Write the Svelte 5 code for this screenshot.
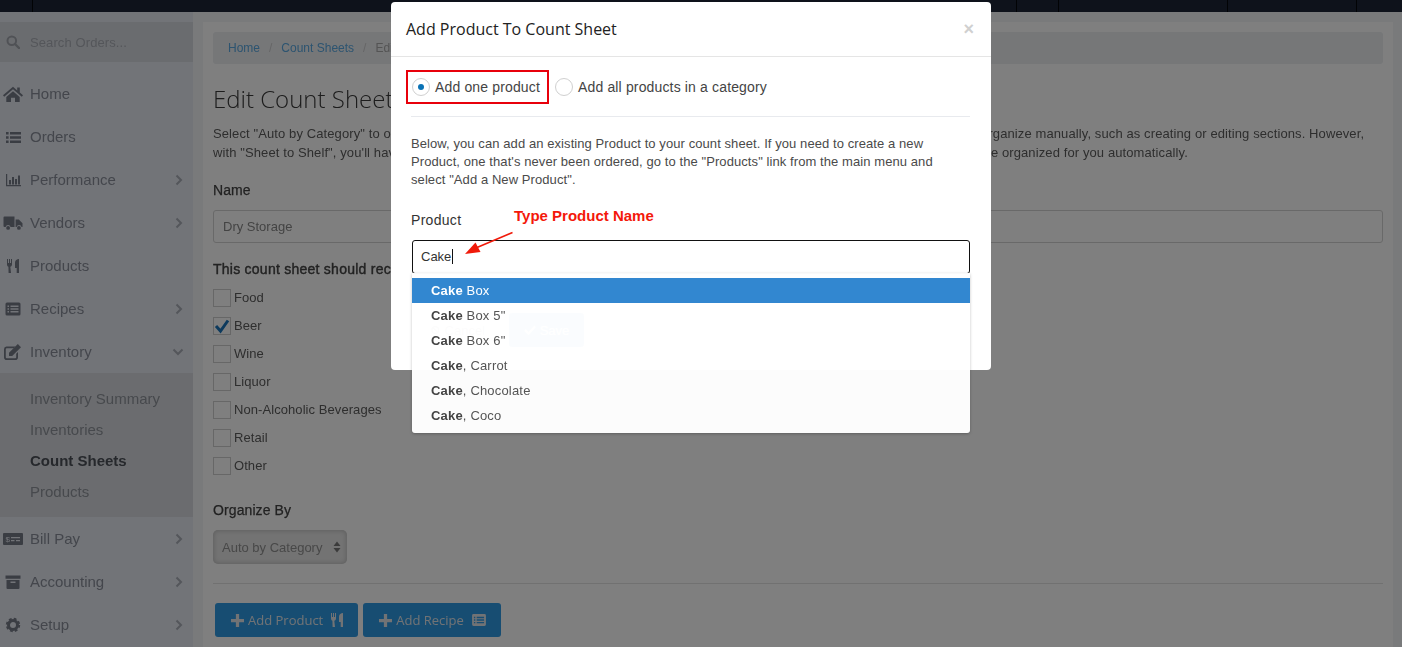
<script>
  const icons = {
    home: `<path d="M10 .8 0 9.3l1.2 1.4L10 3.3l8.8 7.4L20 9.3l-3.2-2.7V1.4h-2.6v3z"/><path d="M3.3 11 10 5.3l6.7 5.7v5H12v-4.2H8V16H3.3z"/>`,
    list: `<path d="M3 3h2.6v2.5H3zM7 3h11v2.5H7zM3 7.2h2.6v2.5H3zM7 7.2h11v2.5H7zM3 11.4h2.6v2.5H3zM7 11.4h11v2.5H7z"/>`,
    chart: `<path d="M3 2h1.2v11H18v1.2H3z"/><path d="M6 8h2v4.4H6zM9 5h2v7.4H9zM12 7h2v5.4h-2zM15 3.5h2v8.9h-2z"/>`,
    truck: `<path d="M.5 2.5A1 1 0 0 1 1.5 1.5h10v10.5H7.6a2.6 2.6 0 0 0-5 0H1.5a1 1 0 0 1-1-1zM12.6 4.5h3.2l3.7 3.7V12h-.9a2.6 2.6 0 0 0-5 0h-1z"/><circle cx="5.1" cy="12.9" r="1.9"/><circle cx="15.9" cy="12.9" r="1.9"/>`,
    food: `<path d="M4 1h1v4h1V1h1v4h1V1h1v5.5c0 1.2-.8 2-1.7 2.3L8 15H5.6l-.2-6.2C4.700 8.500 4 7.700 4 6.500zM16 1v14h-2.300v-5H12V4.500C12 2.500 14 1 16 1z"/>`,
    recipes: `<path fill-rule="evenodd" d="M4 1.500h12A1.500 1.500 0 0 1 17.500 3v10a1.500 1.500 0 0 1-1.500 1.500H4A1.500 1.500 0 0 1 2.500 13V3A1.500 1.500 0 0 1 4 1.500zM4.500 4.500v1.500H6V4.500zM7.500 4.500v1.500h8V4.500zM4.500 7.300v1.500H6V7.300zM7.500 7.300v1.500h8V7.300zM4.500 10.100v1.500H6v-1.500zM7.500 10.100v1.500h8v-1.500z"/>`,
    edit: `<path d="M3.500 2.500h9l-1.800 1.800H3.800a1 1 0 0 0-1 1v7.900a1 1 0 0 0 1 1h8.400a1 1 0 0 0 1-1V9.800L15 8v5.200a2.800 2.800 0 0 1-2.800 2.800H3.800A2.800 2.800 0 0 1 1 13.200V5.300a2.800 2.800 0 0 1 2.500-2.800z"/><path d="M6 8.800 14.800 0 18 3.200 9.200 12H6z"/>`,
    bill: `<path fill-rule="evenodd" d="M1 2h18a1 1 0 0 1 1 1v10a1 1 0 0 1-1 1H1a1 1 0 0 1-1-1V3a1 1 0 0 1 1-1zM8 6v1.300h9V6zM8 9v1.300h3.500V9zM13 9v1.300h4V9z"/><text x="2.600" y="11" font-size="8" font-family="Liberation Sans" fill="#e4e8f0">$</text>`,
    archive: `<path d="M2.500 1.500h15v3.300h-15zM3.500 6h13v8a1 1 0 0 1-1 1h-11a1 1 0 0 1-1-1zM7.500 7.500v1.500h5V7.500z" fill-rule="evenodd"/>`,
    cog: `<circle cx="10" cy="8" r="4.500" fill="none" stroke="currentColor" stroke-width="3"/><circle cx="10" cy="8" r="6.300" fill="none" stroke="currentColor" stroke-width="1.800" stroke-dasharray="2.800 2.150"/>`
  };
  const nav1 = [
    { name: 'Home', icon: 'home' },
    { name: 'Orders', icon: 'list' },
    { name: 'Performance', icon: 'chart', more: true },
    { name: 'Vendors', icon: 'truck', more: true },
    { name: 'Products', icon: 'food' },
    { name: 'Recipes', icon: 'recipes', more: true }
  ];
  const nav2 = [
    { name: 'Bill Pay', icon: 'bill', more: true },
    { name: 'Accounting', icon: 'archive', more: true },
    { name: 'Setup', icon: 'cog', more: true }
  ];
  const sub = ['Inventory Summary', 'Inventories', 'Count Sheets', 'Products'];
  const checks = [['Food', false], ['Beer', true], ['Wine', false], ['Liquor', false], ['Non-Alcoholic Beverages', false], ['Retail', false], ['Other', false]];
  const results = [['Cake', ' Box'], ['Cake', ' Box 5"'], ['Cake', ' Box 6"'], ['Cake', ', Carrot'], ['Cake', ', Chocolate'], ['Cake', ', Coco']];
</script>

{#snippet navItem(item)}
  <a class="nav-item" href="#top">
    <svg class="nav-icon" viewBox="0 0 20 16" width="20" height="16" fill="currentColor">{@html icons[item.icon]}</svg>
    <span class="nav-name">{item.name}</span>
    {#if item.more}
      <svg class="chev" viewBox="0 0 8 12" width="8" height="12"><path d="M1.500 1.500 6 6l-4.500 4.500" fill="none" stroke="currentColor" stroke-width="2"/></svg>
    {/if}
  </a>
{/snippet}

<div class="page">
  <header class="topbar">
    <span style="width:33px"></span>
    <span style="width:984px"></span>
    <span style="width:42px"></span>
    <span style="width:169px"></span>
    <span style="width:129px"></span>
  </header>
  <div class="columns">
    <aside class="sidebar">
      <div class="search">
        <svg viewBox="0 0 14 14" width="14" height="14"><circle cx="5.800" cy="5.800" r="4.300" fill="none" stroke="currentColor" stroke-width="2"/><path d="m9 9 4 4" stroke="currentColor" stroke-width="2.400" stroke-linecap="round"/></svg>
        <span>Search Orders...</span>
      </div>
      <nav>
        {#each nav1 as item}{@render navItem(item)}{/each}
        <a class="nav-item" href="#top">
          <svg class="nav-icon" viewBox="0 0 20 16" width="20" height="16" fill="currentColor">{@html icons.edit}</svg>
          <span class="nav-name">Inventory</span>
          <svg class="chev down" viewBox="0 0 12 8" width="12" height="8"><path d="M1.500 1.500 6 6l4.500-4.500" fill="none" stroke="currentColor" stroke-width="2"/></svg>
        </a>
        <div class="submenu">
          {#each sub as s}
            <a class="sub-item" class:current={s === 'Count Sheets'} href="#top">{s}</a>
          {/each}
        </div>
        {#each nav2 as item}{@render navItem(item)}{/each}
      </nav>
    </aside>
    <main class="panel">
      <div class="breadcrumb"><a href="#top">Home</a><i>/</i><a href="#top">Count Sheets</a><i>/</i><span>Edit</span></div>
      <h1>Edit Count Sheet</h1>
      <p class="intro">Select "Auto by Category" to organize your products by category automatically. Please note, with this option, you will not be able to organize manually, such as creating or editing sections. However, with "Sheet to Shelf", you'll have the freedom to arrange your sheet any way that you like, and in "Auto by Category" your products are organized for you automatically.</p>
      <div class="label name-label">Name</div>
      <div class="field">Dry Storage</div>
      <div class="label rec-label">This count sheet should receive products from:</div>
      <div class="checks">
        {#each checks as [c, on]}
          <div class="check-row">
            <span class="box">
              {#if on}<svg viewBox="0 0 18 18" width="18" height="18"><path d="m3 9 4.500 5L15 3.500" fill="none" stroke="#1b75bb" stroke-width="3"/></svg>{/if}
            </span>
            <span class="check-text">{c}</span>
          </div>
        {/each}
      </div>
      <div class="label org-label">Organize By</div>
      <div class="select">
        <span>Auto by Category</span>
        <svg viewBox="0 0 8 12" width="8" height="12" fill="currentColor"><path d="M4 .5 7.500 5H.5zM4 11.500 .5 7h7z"/></svg>
      </div>
      <hr />
      <div class="actions">
        <button class="btn">
          <svg viewBox="0 0 12 12" width="13" height="13" fill="currentColor"><path d="M4.500 0h3v4.500H12v3H7.500V12h-3V7.500H0v-3h4.500z"/></svg>
          Add Product
          <svg class="after" viewBox="4 1 12 14" width="12" height="14" fill="currentColor">{@html icons.food}</svg>
        </button>
        <button class="btn">
          <svg viewBox="0 0 12 12" width="13" height="13" fill="currentColor"><path d="M4.500 0h3v4.500H12v3H7.500V12h-3V7.500H0v-3h4.500z"/></svg>
          Add Recipe
          <svg class="after" viewBox="2.500 1.500 15 13" width="14" height="12" fill="currentColor">{@html icons.recipes}</svg>
        </button>
      </div>
    </main>
  </div>
</div>

<div class="backdrop"></div>

<section class="modal">
  <header class="modal-head">
    <h2>Add Product To Count Sheet</h2>
    <span class="close">×</span>
  </header>
  <div class="modal-body">
    <div class="radios">
      <label class="radio highlighted"><span class="dot on"></span>Add one product</label>
      <label class="radio"><span class="dot"></span>Add all products in a category</label>
    </div>
    <hr class="mhr" />
    <p class="modal-text">Below, you can add an existing Product to your count sheet. If you need to create a new Product, one that's never been ordered, go to the "Products" link from the main menu and select "Add a New Product".</p>
    <div class="product-wrap">
      <div class="product-label">Product</div>
      <div class="annotation">Type Product Name</div>
      <svg class="arrow" viewBox="0 0 50 26" width="50" height="26"><path d="M47.500 2.500 12 17.500" stroke="#f01a0a" stroke-width="1.600" fill="none"/><path d="M0 24 10.500 12.500l5 9.500z" fill="#f01a0a"/></svg>
      <div class="typeahead">Cake<span class="caret"></span></div>
      <ul class="results">
        {#each results as [b, rest], i}
          <li class:active={i === 0}><b>{b}</b>{rest}</li>
        {/each}
      </ul>
    </div>
    <div class="modal-actions">
      <span class="cancel">
        <svg viewBox="0 0 10 10" width="10" height="10"><circle cx="5" cy="5" r="4" fill="none" stroke="currentColor" stroke-width="1.400"/><path d="m2.200 2.200 5.600 5.600" stroke="currentColor" stroke-width="1.400"/></svg>
        Cancel
      </span>
      <span class="save">
        <svg viewBox="0 0 12 10" width="12" height="10"><path d="m1 5 3.500 3.500L11 1.500" fill="none" stroke="currentColor" stroke-width="2"/></svg>
        Save
      </span>
    </div>
  </div>
</section>

<style>
  :global(body) {
    margin: 0;
    overflow: hidden;
    background: #f2f4f6;
    font-family: "Liberation Sans", Arial, sans-serif;
  }
  .page {
    height: 647px;
    overflow: hidden;
    background: #f2f4f6;
    filter: blur(0.35px);
    color: #444;
    font-size: 13px;
  }
  .topbar {
    height: 12px;
    background: #1c2536;
    display: flex;
  }
  .topbar span {
    display: block;
    height: 12px;
    box-sizing: border-box;
    border-right: 1px solid #05070b;
  }
  .columns {
    display: flex;
    height: 635px;
  }
  .sidebar {
    width: 193px;
    flex: none;
    background: #e4e8f0;
    padding-top: 10px;
    box-sizing: border-box;
    color: #888d99;
  }
  .search {
    height: 40px;
    background: #d5d8de;
    display: flex;
    align-items: center;
    font-size: 13px;
    letter-spacing: 0.1px;
    color: #a9adb5;
    padding-left: 6px;
    gap: 10px;
  }
  .search svg { flex: none; color: #a0a4ac; }
  nav { margin-top: 10px; }
  .nav-item {
    height: 43px;
    display: flex;
    align-items: center;
    color: inherit;
    text-decoration: none;
    font-size: 15px;
    position: relative;
  }
  .nav-icon {
    width: 20px;
    margin-left: 3px;
    margin-right: 7px;
    flex: none;
    color: #757a87;
  }
  .chev {
    margin-left: auto;
    margin-right: 10px;
    color: #a8adb6;
  }
  .chev.down { margin-right: 9px; }
  .submenu {
    background: #d6d9de;
    padding: 10px 0;
  }
  .sub-item {
    display: flex;
    align-items: center;
    height: 31px;
    padding-left: 30px;
    font-size: 15px;
    color: #8e929a;
    text-decoration: none;
  }
  .sub-item.current {
    color: #4c5058;
    font-weight: 700;
  }
  .panel {
    flex: none;
    width: 1190px;
    height: 640px;
    margin: 10px 0 0 10px;
    background: #ffffff;
    padding: 10px;
    box-sizing: border-box;
  }
  .breadcrumb {
    height: 32px;
    background: #eceef1;
    border-radius: 3px;
    display: flex;
    align-items: center;
    padding-left: 15px;
    font-size: 12px;
    color: #a8a8a8;
  }
  .breadcrumb a { color: #5aa8e0; text-decoration: none; }
  .breadcrumb i { font-style: normal; margin: 0 9px 0 9px; color: #ccc; }
  h1 {
    margin: 17px 0 0;
    font: 300 24px/36px "Open Sans", sans-serif;
    color: #3a3a3a;
  }
  .intro {
    margin: 8px 0 0;
    font-size: 13px;
    line-height: 18.500px;
    letter-spacing: 0.105px;
    color: #5c5c5c;
  }
  .label {
    font-size: 14px;
    line-height: 20px;
    font-weight: 400;
    color: #444;
    letter-spacing: 0.1px;
    -webkit-text-stroke: 0.25px #444;
  }
  .name-label { margin-top: 18px; }
  .field {
    margin-top: 10px;
    height: 33px;
    box-sizing: border-box;
    border: 1px solid #d2d2d2;
    border-radius: 3px;
    padding-left: 9px;
    display: flex;
    align-items: center;
    color: #888;
  }
  .rec-label { margin-top: 16px; letter-spacing: 0.25px; -webkit-text-stroke: 0.4px #444; }
  .checks {
    margin-top: 10px;
    display: flex;
    flex-direction: column;
    gap: 10px;
  }
  .check-row {
    display: flex;
    align-items: center;
    height: 18px;
    gap: 3px;
    color: #5c5c5c;
  }
  .check-text {
    position: relative;
    top: -1px;
    letter-spacing: 0.07px;
  }
  .box {
    width: 18px;
    height: 18px;
    box-sizing: border-box;
    border: 1px solid #cfcfcf;
    position: relative;
    display: block;
  }
  .box svg { position: absolute; left: -1px; top: -1px; }
  .org-label { margin-top: 25px; }
  .select {
    margin-top: 10px;
    width: 134px;
    height: 34px;
    box-sizing: border-box;
    border-radius: 5px;
    background: #e6e6e6;
    box-shadow: inset 0 0 4px 1px #c0c0c0;
    display: flex;
    align-items: center;
    justify-content: space-between;
    padding: 0 6px 0 9px;
    color: #909090;
    font-size: 13px;
  }
  .select svg { color: #777; }
  hr {
    border: 0;
    border-top: 1px solid #e3e3e3;
    margin: 19px 0 0;
  }
  .actions {
    margin: 19px 0 0 2px;
    display: flex;
    gap: 5px;
  }
  .btn {
    height: 34px;
    border: 0;
    border-radius: 3px;
    background: #2e9ae4;
    color: #e2e6ea;
    font: 400 13px "Open Sans", sans-serif;
    display: flex;
    align-items: center;
    padding: 0 15px 0 16px;
    gap: 4px;
  }
  .btn .after { margin-left: 4px; }
  .backdrop {
    position: fixed;
    inset: 0;
    background: rgba(0, 0, 0, 0.5);
  }
  .modal {
    position: absolute;
    left: 391px;
    top: 2px;
    width: 600px;
    background: #fff;
    border-radius: 4px;
    box-sizing: border-box;
  }
  .modal-head {
    height: 54px;
    border-bottom: 1px solid #e5e5e5;
    display: flex;
    align-items: center;
    justify-content: space-between;
    padding: 0 17px 0 15px;
  }
  h2 {
    margin: 0;
    font: 400 16px "Open Sans", sans-serif;
    color: #222;
  }
  .close {
    font: 700 18px "Liberation Sans", sans-serif;
    color: #d0d0d0;
  }
  .modal-body {
    padding: 13px 21px 23px 20px;
  }
  .radios {
    display: flex;
    align-items: center;
    height: 34px;
    gap: 6px;
    margin-left: -5px;
    font-size: 14px;
    letter-spacing: 0.15px;
    color: #444;
  }
  .radio {
    display: flex;
    align-items: center;
    height: 34px;
    box-sizing: border-box;
    gap: 5px;
  }
  .highlighted {
    border: 2px solid #e8000b;
    padding: 0 4px;
    width: 143px;
  }
  .dot {
    width: 18px;
    height: 18px;
    box-sizing: border-box;
    border: 1px solid #d0d0d0;
    border-radius: 50%;
    position: relative;
    display: block;
  }
  .dot.on::after {
    content: "";
    position: absolute;
    left: 5px;
    top: 5px;
    width: 6px;
    height: 6px;
    border-radius: 50%;
    background: #0a72b5;
  }
  .mhr {
    margin: 12px 0 0;
    border-top: 1px solid #e8eaee;
  }
  .modal-text {
    margin: 18px 0 0;
    font-size: 13px;
    line-height: 18px;
    letter-spacing: 0.08px;
    color: #4a4a4a;
  }
  .product-wrap {
    position: relative;
    margin-top: 21px;
  }
  .product-label {
    font-size: 14px;
    line-height: 20px;
    letter-spacing: 0.3px;
    color: #333;
  }
  .annotation {
    position: absolute;
    left: 103px;
    top: -4px;
    font-size: 15px;
    line-height: 20px;
    font-weight: 700;
    color: #f4180a;
  }
  .arrow {
    position: absolute;
    left: 54px;
    top: 20px;
  }
  .typeahead {
    margin-top: 10px;
    height: 34px;
    box-sizing: border-box;
    border: 1px solid #111;
    border-radius: 3px;
    margin-left: 1px;
    padding: 0 0 2px 8px;
    display: flex;
    align-items: center;
    font-size: 13px;
    color: #333;
  }
  .caret {
    display: block;
    width: 1px;
    height: 15px;
    background: #111;
    margin-left: 1px;
  }
  .results {
    position: absolute;
    left: 1px;
    right: 0;
    top: 63px;
    margin: 0;
    padding: 5px 0 5px;
    list-style: none;
    background: rgba(255, 255, 255, 0.98);
    border-radius: 0 0 3px 3px;
    box-shadow: 0 1px 3px rgba(0, 0, 0, 0.25);
    font-size: 13px;
    letter-spacing: 0.18px;
    color: #555;
  }
  .results li {
    height: 25px;
    display: block;
    line-height: 25px;
    padding-left: 19px;
  }
  .results b { color: #444; }
  .results li.active {
    background: #3287d0;
    color: #fff;
  }
  .results li.active b { color: #fff; }
  .modal-actions {
    margin-top: 39px;
    height: 34px;
    display: flex;
    align-items: center;
    font-size: 13px;
    padding-left: 20px;
    gap: 24px;
  }
  .cancel {
    color: #555;
    width: 54px;
    white-space: nowrap;
    display: flex;
    align-items: center;
    gap: 5px;
  }
  .save {
    width: 75px;
    height: 34px;
    background: #1f7ab8;
    color: #fff;
    border-radius: 3px;
    display: flex;
    align-items: center;
    justify-content: center;
    gap: 4px;
  }
</style>
